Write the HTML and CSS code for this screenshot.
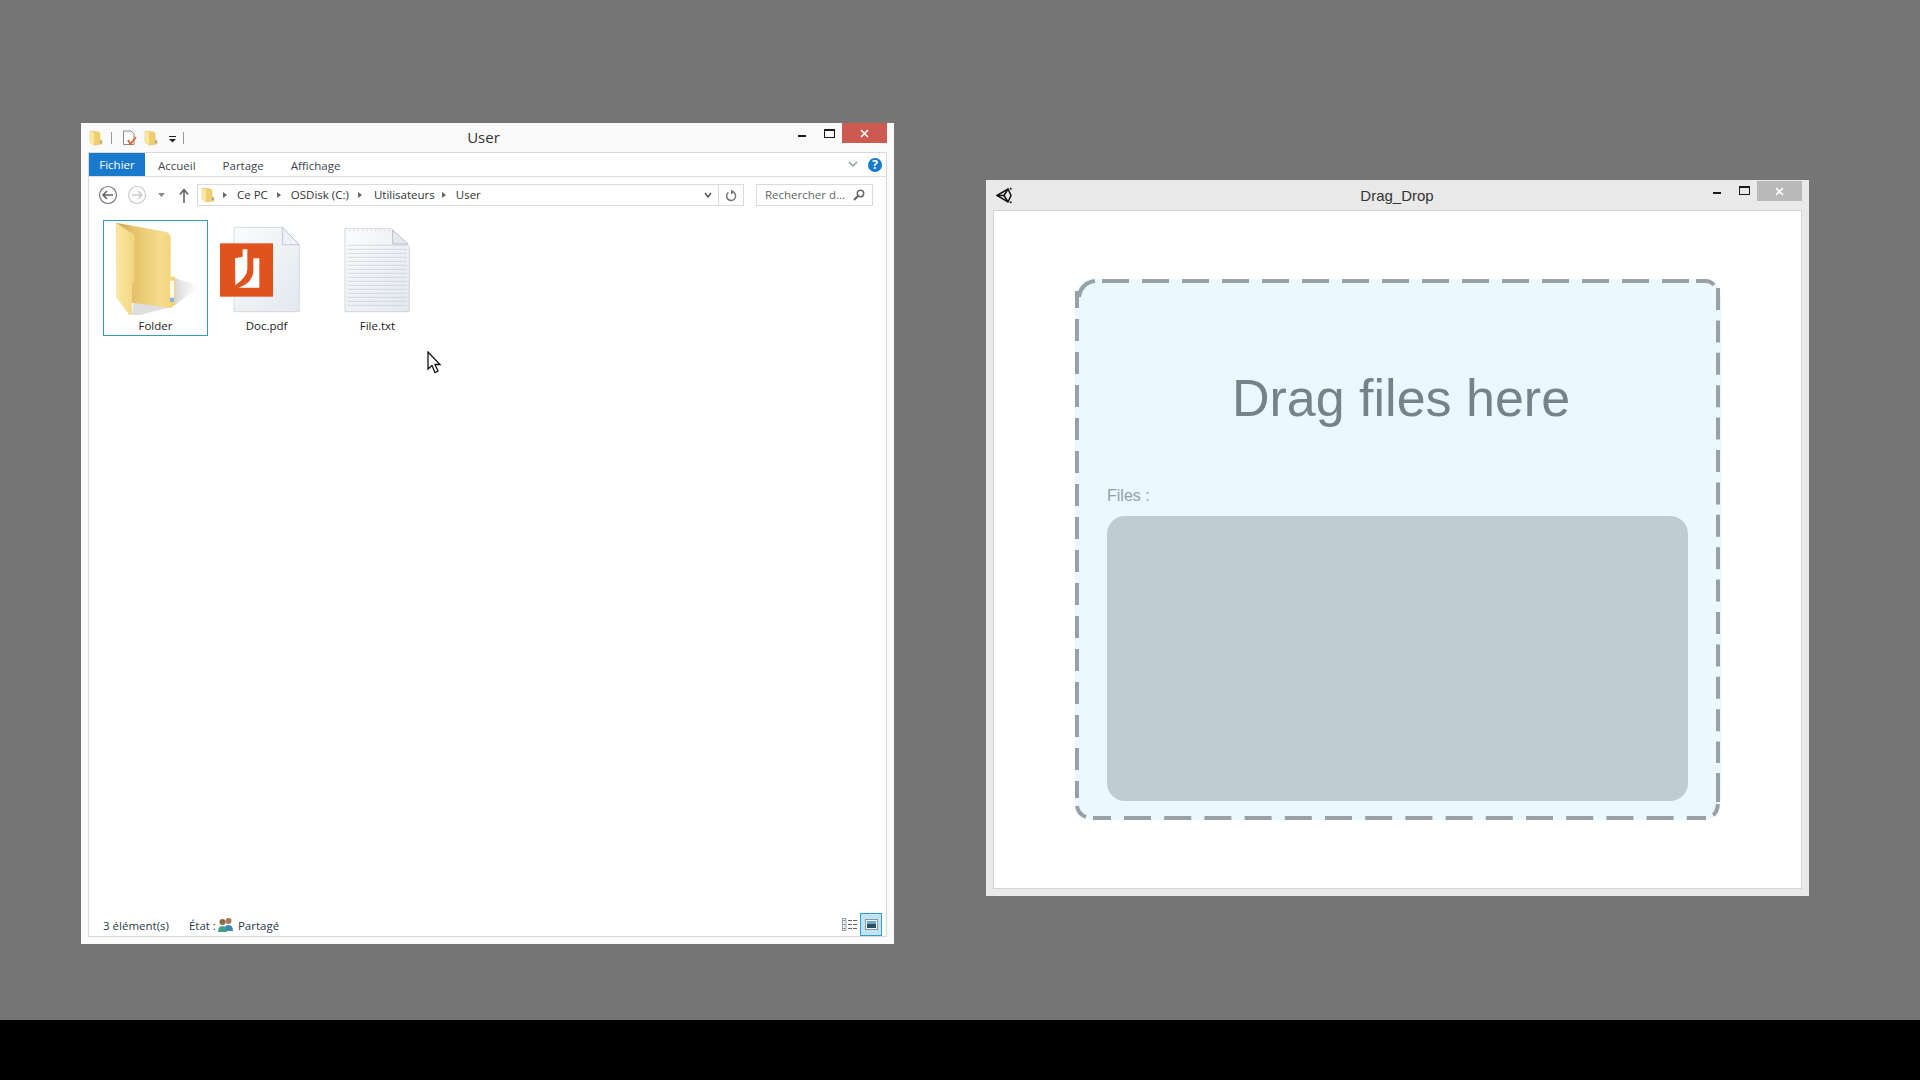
FILE: index.html
```html
<!DOCTYPE html>
<html>
<head>
    <title>Drag and drop</title>
    <link rel="stylesheet" href="styles.css">
</head>
<body>
    <svg class="defs" width="0" height="0">
        <defs>
            <linearGradient id="folder-inner" x1="0" y1="0" x2="1" y2="0">
                <stop offset="0" stop-color="#c9a452"/>
                <stop offset="0.3" stop-color="#e5c26a"/>
                <stop offset="0.75" stop-color="#f6dc8e"/>
                <stop offset="1" stop-color="#f3d271"/>
            </linearGradient>
            <linearGradient id="folder-front" x1="0" y1="0" x2="1" y2="0">
                <stop offset="0" stop-color="#fbe7a2"/>
                <stop offset="1" stop-color="#f3d67f"/>
            </linearGradient>
            <linearGradient id="folder-shadow" x1="0" y1="0" x2="1" y2="0">
                <stop offset="0" stop-color="#a0a0a0" stop-opacity="0.55"/>
                <stop offset="1" stop-color="#d0d0d0" stop-opacity="0"/>
            </linearGradient>
            <linearGradient id="page-fill" x1="0" y1="0" x2="1" y2="1">
                <stop offset="0" stop-color="#fbfcfd"/>
                <stop offset="1" stop-color="#e3e8ed"/>
            </linearGradient>
            <symbol id="small-folder" viewBox="0 0 14 16">
                <path d="M1 1 L9 2 Q11 2 11 4 V10 H13 V14 L5 15 L1 12 Z" fill="#f0ce6e" stroke="#d8b655" stroke-width="0.5"/>
                <path d="M1 1 L5 3 V15 L1 12 Z" fill="#fbe7a2"/>
                <rect x="11" y="11" width="1.5" height="2" fill="#6f9fd8"/>
            </symbol>
        </defs>
    </svg>

    <div class="desktop">
        <section class="win explorer">
            <header class="explorer-title">
                <div class="qat">
                    <svg class="qat-folder" width="14" height="16"><use href="#small-folder"/></svg>
                    <span class="qat-sep"></span>
                    <svg class="qat-doc" width="15" height="16" viewBox="0 0 15 16">
                        <path d="M1.5 1 H9 L12 4 V14.5 H1.5 Z" fill="#fff" stroke="#8a8a8a"/>
                        <path d="M6 10 L8.5 14 L14 7" fill="none" stroke="#e2673a" stroke-width="2"/>
                    </svg>
                    <svg class="qat-folder2" width="14" height="16"><use href="#small-folder"/></svg>
                    <svg class="qat-more" width="7" height="7" viewBox="0 0 7 7">
                        <rect x="0" y="0" width="7" height="1" fill="#222"/>
                        <path d="M0 3 H7 L3.5 6.5 Z" fill="#222"/>
                    </svg>
                    <span class="qat-sep qat-sep-end"></span>
                </div>
                <div class="explorer-name">User</div>
                <div class="controls">
                    <span class="ctl-min"></span>
                    <span class="ctl-max"></span>
                    <span class="ctl-close explorer-close">
                        <svg width="9" height="9" viewBox="0 0 9 9"><path d="M1 1 L8 8 M8 1 L1 8" stroke="#fff" stroke-width="1.6"/></svg>
                    </span>
                </div>
            </header>

            <div class="explorer-panel">
                <nav class="tabs">
                    <span class="tab tab-file">Fichier</span>
                    <span class="tab tab-home">Accueil</span>
                    <span class="tab tab-share">Partage</span>
                    <span class="tab tab-view">Affichage</span>
                    <svg class="ribbon-chevron" width="10" height="7" viewBox="0 0 10 7"><path d="M1 1 L5 5 L9 1" fill="none" stroke="#8f9aa3" stroke-width="1.5"/></svg>
                    <span class="help">?</span>
                </nav>

                <div class="address-row">
                    <svg class="nav-buttons" width="108" height="22" viewBox="0 0 108 22">
                        <circle cx="19" cy="11" r="8.5" fill="#fff" stroke="#777" stroke-width="1.2"/>
                        <path d="M24 11 H14 M18 7 L14 11 L18 15" fill="none" stroke="#666" stroke-width="1.6"/>
                        <circle cx="48" cy="11" r="8.5" fill="#fff" stroke="#ccc" stroke-width="1.2"/>
                        <path d="M43 11 H53 M49 7 L53 11 L49 15" fill="none" stroke="#ccc" stroke-width="1.6"/>
                        <path d="M69 9 H76 L72.5 13 Z" fill="#8b8b8b"/>
                        <path d="M95 19 V6 M91 10.5 L95 5.5 L99 10.5" fill="none" stroke="#666" stroke-width="1.6"/>
                    </svg>
                    <div class="address-box">
                        <svg class="crumb-folder" width="14" height="16"><use href="#small-folder"/></svg>
                        <span class="crumb-arrow"></span>
                        <span class="crumb crumb-pc">Ce PC</span>
                        <span class="crumb-arrow"></span>
                        <span class="crumb crumb-disk">OSDisk (C:)</span>
                        <span class="crumb-arrow"></span>
                        <span class="crumb crumb-users">Utilisateurs</span>
                        <span class="crumb-arrow"></span>
                        <span class="crumb">User</span>
                        <svg class="address-drop" width="8" height="6" viewBox="0 0 8 6"><path d="M1 1 L4 5 L7 1" fill="none" stroke="#555" stroke-width="1.5"/></svg>
                        <span class="address-refresh">
                            <svg width="12" height="13" viewBox="0 0 12 13">
                                <path d="M8.5 3.2 A4.5 4.5 0 1 1 3.4 3.4" fill="none" stroke="#777" stroke-width="1.5"/>
                                <path d="M6 0.5 L9.8 3 L6 5.5 Z" fill="#777"/>
                            </svg>
                        </span>
                    </div>
                    <div class="search-box">
                        <span class="search-text">Rechercher d...</span>
                        <svg width="12" height="12" viewBox="0 0 12 12">
                            <circle cx="7.5" cy="4.5" r="3.2" fill="none" stroke="#666" stroke-width="1.5"/>
                            <path d="M5 7 L1 11" stroke="#666" stroke-width="2"/>
                        </svg>
                    </div>
                </div>

                <div class="files">
                    <div class="file-item selected">
                        <svg class="file-icon" viewBox="42 33 309 282">
                            <path d="M240 296 L255 285 L255 205 L330 228 Z" fill="url(#folder-shadow)"/>
                            <path d="M125 322 L130 275 L240 292 Z" fill="#c4c4c4" opacity="0.55"/>
                            <path d="M78 38 L225 65 Q242 68 242 85 V200 H255 V285 L242 294 L125 278 V150 Z" fill="url(#folder-inner)"/>
                            <path d="M78 38 L133 75 V210 L125 225 V324 L80 262 Z" fill="url(#folder-front)" stroke="#e9cf85" stroke-width="1"/>
                            <rect x="240" y="212" width="12" height="52" fill="#fdfaf0"/>
                            <rect x="240" y="263" width="12" height="13" fill="#86b4ea"/>
                        </svg>
                        <span class="file-name">Folder</span>
                    </div>
                    <div class="file-item">
                        <svg class="file-icon" viewBox="375 33 309 282">
                            <path d="M432 52 H578 L628 106 V305 H432 Z" fill="url(#page-fill)" stroke="#c6ccd1" stroke-width="2"/>
                            <path d="M578 52 V104 H628 Z" fill="#eef1f5" stroke="#adb5be" stroke-width="2"/>
                            <rect x="390" y="100" width="159" height="160" fill="#e0531f"/>
                            <path d="M435 145 L458 140 V118 L472 118 V178 Q472 200 436 226 Z" fill="#fff"/>
                            <path d="M490 145 H508 V233 H445 Q490 218 490 180 Z" fill="#fff"/>
                        </svg>
                        <span class="file-name">Doc.pdf</span>
                    </div>
                    <div class="file-item">
                        <svg class="file-icon" viewBox="708 33 309 282">
                            <path d="M765 56 H905 L958 112 V305 H765 Z" fill="url(#page-fill)" stroke="#bfc5cc" stroke-width="2"/>
                            <path d="M772 106 H950 M772 118 H950 M772 130 H950 M772 142 H950 M772 154 H950 M772 166 H950 M772 178 H950 M772 190 H950 M772 202 H950 M772 214 H950 M772 226 H950 M772 238 H950 M772 250 H950 M772 262 H950 M772 274 H950 M772 286 H950" stroke="#c3ccd7" stroke-width="2"/>
                            <path d="M778 62 H900" stroke="#b0b7bf" stroke-width="2" stroke-dasharray="3 10"/>
                            <path d="M908 60 V102 H955 Z" fill="#e4e8ec" stroke="#a4acb4" stroke-width="2"/>
                        </svg>
                        <span class="file-name">File.txt</span>
                    </div>
                </div>

                <footer class="status">
                    <span class="status-text status-count">3 élément(s)</span>
                    <span class="status-text">État :</span>
                    <svg class="status-users" width="17" height="15" viewBox="0 0 17 15">
                        <circle cx="11.5" cy="4" r="3" fill="#a77b5a"/>
                        <path d="M7 14 Q7 8 11.5 8 Q16 8 16 14 Z" fill="#3c86b5"/>
                        <circle cx="5.5" cy="5" r="3" fill="#8d6a4c"/>
                        <path d="M1 15 Q1 9 5.5 9 Q10 9 10 15 Z" fill="#3fa287"/>
                    </svg>
                    <span class="status-text">Partagé</span>
                    <svg class="view-details" width="15" height="13" viewBox="0 0 15 13">
                        <rect x="0.5" y="0.5" width="3.5" height="12" fill="#eef1f3" stroke="#9aa3aa"/>
                        <path d="M1.5 2.5 H3 M1.5 6.5 H3 M1.5 10.5 H3" stroke="#666"/>
                        <path d="M6 2.5 H15 M6 6.5 H15 M6 10.5 H15" stroke="#666" stroke-dasharray="4 1"/>
                    </svg>
                    <span class="view-large">
                        <svg width="13" height="11" viewBox="0 0 13 11">
                            <rect x="0.5" y="0.5" width="12" height="10" fill="#f4f6f8" stroke="#8f979e"/>
                            <rect x="2" y="2" width="9" height="3" fill="#6aa6d0"/>
                            <rect x="2" y="5" width="9" height="4" fill="#2b4f60"/>
                        </svg>
                    </span>
                </footer>
            </div>
        </section>

        <svg class="cursor" width="16" height="24" viewBox="0 0 16 24">
            <path d="M1 1 V18 L5 14.5 L8 21.5 L11 20 L8 13.5 H13 Z" fill="#fff" stroke="#111" stroke-width="1.3"/>
        </svg>

        <section class="win unity">
            <header class="unity-title">
                <svg class="unity-logo" width="17" height="17" viewBox="0 0 17 17">
                    <path d="M1 8.5 L12 2 L15 8.5 L12 15 Z" fill="none" stroke="#111" stroke-width="1.5"/>
                    <path d="M14 1 L15.5 2.5 M14 16 L15.5 14.5 M1 8.5 H8 L12 2 M8 8.5 L12 15" fill="none" stroke="#111" stroke-width="1.5"/>
                </svg>
                <div class="unity-name">Drag_Drop</div>
                <div class="controls">
                    <span class="ctl-min"></span>
                    <span class="ctl-max"></span>
                    <span class="ctl-close unity-close">
                        <svg width="9" height="9" viewBox="0 0 9 9"><path d="M1 1 L8 8 M8 1 L1 8" stroke="#fff" stroke-width="1.6"/></svg>
                    </span>
                </div>
            </header>
            <div class="unity-panel">
                <div class="drop-zone">
                    <svg class="drop-outline" width="646" height="541" viewBox="0 0 646 541" fill="none" stroke="#98a1a8" stroke-width="4">
                        <path d="M4 18 Q6 4 20 2"/>
                        <path d="M27 2 H622" stroke-dasharray="27 13"/>
                        <path d="M621 2 H630 Q636 2 639 6"/>
                        <path d="M643 9 V484" stroke-dasharray="22 10.4"/>
                        <path d="M643 494 V523"/>
                        <path d="M643 525 Q642 534 638 536"/>
                        <path d="M18 539 H631" stroke-dasharray="18 13 27 13.2 27 13.2 27 13.2 27 13.2 27 13.2 27 13.2 27 13.2 27 13.2 27 13.2 27 13.2 27 13.2 27 13.2 27 13.2 27 13.2 27 13.2"/>
                        <path d="M2 12 V519" stroke-dasharray="22 11" stroke-dashoffset="5"/>
                        <path d="M2 527 Q3 535 11 538"/>
                    </svg>
                    <h1 class="drop-title">Drag files here</h1>
                    <div class="files-label">Files :</div>
                    <div class="files-box"></div>
                </div>
            </div>
        </section>
    </div>
    <div class="black-bar"></div>
</body>
</html>
```

FILE: styles.css
```css
body {
    margin: 0;
    background: #000;
    font-family: "Open Sans", "Noto Sans", sans-serif;
    color: #1e2b3a;
}

.defs {
    position: absolute;
}

.desktop {
    position: relative;
    height: 1020px;
    background: #757575;
    overflow: hidden;
}

.black-bar {
    height: 60px;
    background: #000;
}

.win {
    position: absolute;
    box-sizing: border-box;
    display: flex;
    flex-direction: column;
}

/* explorer window */
.explorer {
    left: 81px;
    top: 123px;
    width: 813px;
    height: 821px;
    padding: 0 7px 7px;
    background: #fafafa;
}

.explorer-title {
    display: flex;
    height: 29px;
    flex: none;
    padding-left: 1px;
}

.qat {
    display: flex;
    align-items: center;
    width: 94px;
}

.qat svg {
    flex: none;
}

.qat-sep {
    width: 1px;
    height: 12px;
    margin: 0 10px 0 8px;
    background: #9a9a9a;
}

.qat-folder2 {
    margin-left: 7px;
}

.qat-more {
    margin-left: 11px;
    margin-top: 3px;
}

.qat-sep-end {
    margin: 0 0 0 7px;
}

.explorer-name {
    flex: 1;
    padding-right: 14px;
    text-align: center;
    font-size: 15px;
    line-height: 28px;
    color: #333;
}

.controls {
    display: flex;
    flex: none;
}

.ctl-min {
    width: 8px;
    height: 2px;
    margin: 12px 18px 0 0;
    background: #1a1a1a;
}

.ctl-max {
    box-sizing: border-box;
    width: 11px;
    height: 9px;
    margin: 6px 7px 0 0;
    border: 1px solid #1a1a1a;
    border-top-width: 2px;
}

.ctl-close {
    display: flex;
    align-items: center;
    justify-content: center;
    width: 45px;
    height: 20px;
}

.explorer-close {
    background: #cd5a50;
}

.explorer-panel {
    flex: 1;
    display: flex;
    flex-direction: column;
    background: #fff;
    border: 1px solid #d9d9d9;
}

.tabs {
    display: flex;
    align-items: center;
    height: 23px;
    flex: none;
    border-bottom: 1px solid #dedede;
    font-size: 11.5px;
    color: #3c4650;
}

.tab {
    margin-top: 2px;
}

.tab-file {
    width: 56px;
    height: 23px;
    margin-top: 0;
    margin-right: 13px;
    background: #1979ca;
    color: #fff;
    text-align: center;
    line-height: 23px;
}

.tab-home {
    margin-right: 27px;
}

.tab-share {
    margin-right: 27px;
}

.ribbon-chevron {
    margin-left: auto;
    margin-right: 10px;
}

.help {
    width: 14px;
    height: 14px;
    margin-right: 4px;
    border-radius: 50%;
    background: #1579cc;
    color: #fff;
    font-size: 12px;
    font-weight: bold;
    line-height: 14px;
    text-align: center;
}

.address-row {
    display: flex;
    flex: none;
    padding-top: 7px;
}

.address-box {
    box-sizing: border-box;
    display: flex;
    align-items: center;
    width: 547px;
    height: 22px;
    border: 1px solid #dadada;
    font-size: 11.5px;
    color: #333;
}

.crumb {
    margin-top: -2px;
}

.crumb-folder {
    margin-left: 3px;
}

.crumb-arrow {
    width: 0;
    height: 0;
    margin: 0 10px 0 9px;
    border-left: 4px solid #666;
    border-top: 3px solid transparent;
    border-bottom: 3px solid transparent;
}

.crumb-folder + .crumb-arrow {
    margin-left: 8px;
}

.crumb-disk + .crumb-arrow {
    margin-right: 12px;
}

.crumb-users + .crumb-arrow {
    margin-left: 7px;
}

.address-drop {
    margin-left: auto;
    margin-right: 6px;
}

.address-refresh {
    display: flex;
    align-items: center;
    justify-content: center;
    width: 24px;
    height: 20px;
    border-left: 1px solid #dadada;
}

.search-box {
    box-sizing: border-box;
    display: flex;
    align-items: center;
    justify-content: space-between;
    width: 117px;
    height: 22px;
    margin-left: 12px;
    padding: 0 7px 0 8px;
    border: 1px solid #dadada;
    font-size: 11.5px;
    color: #666;
}

.search-text {
    margin-top: -2px;
}

.files {
    flex: 1;
    display: flex;
    align-items: flex-start;
    gap: 6px;
    padding: 14px 0 0 14px;
}

.file-item {
    box-sizing: border-box;
    display: flex;
    flex-direction: column;
    align-items: center;
    width: 105px;
    height: 116px;
    border: 1px solid transparent;
}

.selected {
    border-color: #3b96c2;
}

.file-icon {
    display: block;
    flex: none;
    width: 103px;
    height: 94px;
}

.file-name {
    font-size: 11.5px;
    line-height: 22px;
    color: #222;
}

.status {
    display: flex;
    align-items: center;
    height: 23px;
    flex: none;
    padding-left: 14px;
    font-size: 11.5px;
    color: #2c3a4c;
}

.status-text {
    margin-top: 2px;
}

.status-count {
    margin-right: 20px;
}

.status-users {
    margin: 0 4px 0 1px;
}

.view-details {
    margin-left: auto;
    margin-right: 3px;
}

.view-large {
    box-sizing: border-box;
    display: flex;
    align-items: center;
    justify-content: center;
    width: 22px;
    height: 23px;
    margin-right: 4px;
    background: #c0e3f5;
    border: 1px solid #2f9ccb;
}

.cursor {
    position: absolute;
    left: 427px;
    top: 351px;
}

/* unity window */
.unity {
    left: 986px;
    top: 180px;
    width: 823px;
    height: 716px;
    padding: 0 7px 7px;
    background: #e9e9e9;
}

.unity-title {
    display: flex;
    height: 30px;
    flex: none;
}

.unity-logo {
    margin: 7px 0 0 3px;
}

.unity-name {
    flex: 1;
    padding-left: 68px;
    text-align: center;
    font-family: "Liberation Sans", sans-serif;
    font-size: 15px;
    line-height: 31px;
    color: #333;
}

.unity-close {
    margin-top: 1px;
    background: #b9b9b9;
}

.unity-panel {
    flex: 1;
    padding: 68px 0 0 81px;
    background: #fff;
    border: 1px solid #d4d4d4;
}

.drop-zone {
    position: relative;
    width: 646px;
    height: 541px;
    border-radius: 18px;
    background: #ebf8ff;
    font-family: "Liberation Sans", sans-serif;
}

.drop-outline {
    position: absolute;
    left: 0;
    top: 0;
}

.drop-title {
    margin: 0;
    padding: 89px 0 0 6px;
    font-size: 52px;
    font-weight: normal;
    line-height: 60px;
    text-align: center;
    color: #75838b;
}

.files-label {
    margin: 59px 0 11px 32px;
    font-size: 16px;
    line-height: 18px;
    color: #94a1a9;
}

.files-box {
    width: 581px;
    height: 285px;
    margin-left: 32px;
    border-radius: 18px;
    background: #bfccd2;
}
```
